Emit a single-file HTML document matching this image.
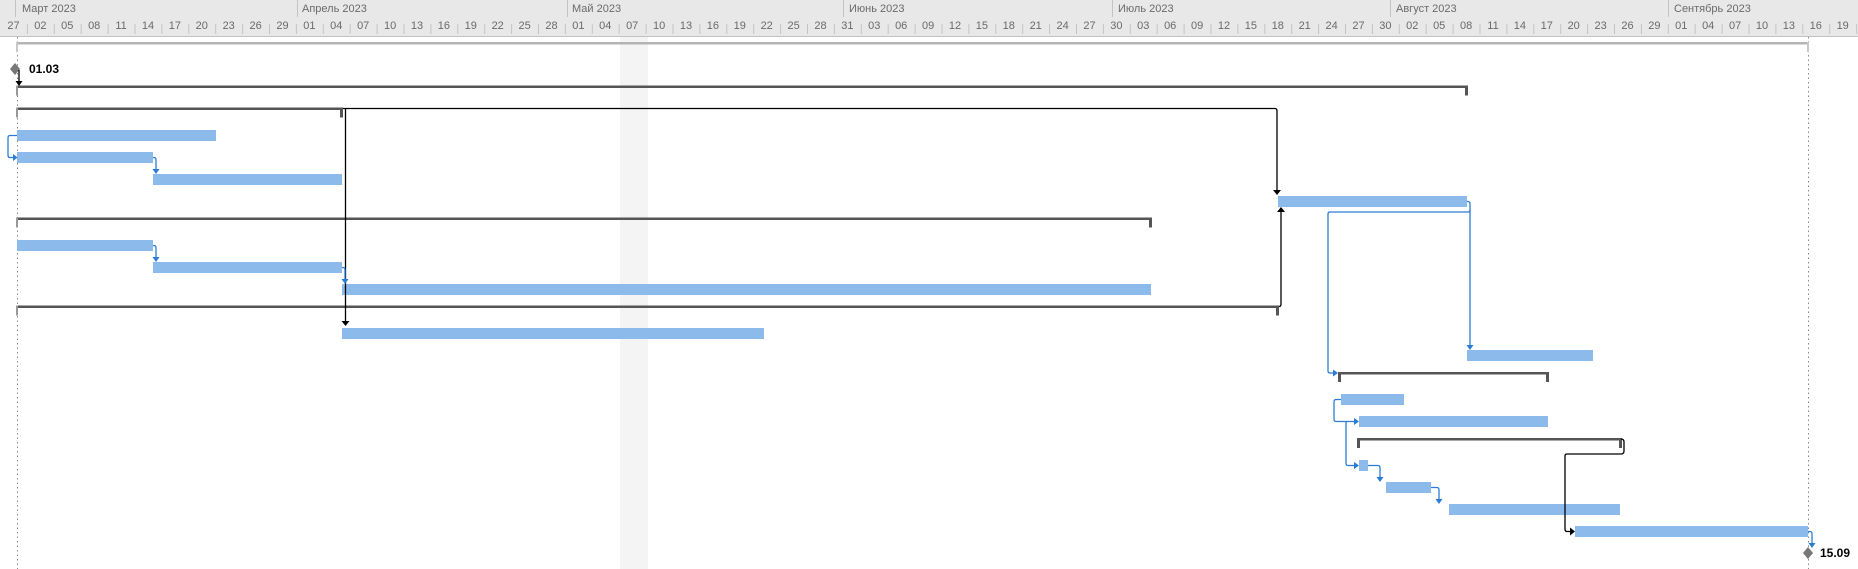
<!DOCTYPE html>
<html><head><meta charset="utf-8"><style>
html,body{margin:0;padding:0;background:#fff;width:1858px;height:569px;overflow:hidden}
svg{display:block}
text{font-family:"Liberation Sans",sans-serif}
.h{font-size:11px;fill:#6a6a6a}
.d{font-size:11px;fill:#6a6a6a;text-anchor:middle}
.b{fill:#8cbbeb}
.s{fill:#555}
.k{stroke:#000;stroke-width:1.3;fill:none}
.u{stroke:#2b7cd3;stroke-width:1.3;fill:none}
.ka{fill:#000}.ua{fill:#2b7cd3}
</style></head><body>
<svg width="1858" height="569" xmlns="http://www.w3.org/2000/svg">
<defs>
<pattern id="tk" x="0" y="0" width="26.9" height="20" patternUnits="userSpaceOnUse"><rect x="0" y="4" width="1" height="10" fill="#c4c4c4"/></pattern>
</defs>
<rect x="0" y="0" width="1858" height="36" fill="#e8e8e8"/>
<rect x="1" y="18" width="1858" height="18" fill="url(#tk)"/>
<rect x="0" y="36" width="1858" height="1" fill="#c2c2c2"/>
<g fill="#c4c4c4">
<rect x="15" y="0" width="1" height="17"/><rect x="297" y="0" width="1" height="17"/><rect x="567" y="0" width="1" height="17"/><rect x="843" y="0" width="1" height="17"/><rect x="1112" y="0" width="1" height="17"/><rect x="1390" y="0" width="1" height="17"/><rect x="1668" y="0" width="1" height="17"/>
</g>
<text class="h" x="22" y="12">Март 2023</text>
<text class="h" x="302" y="12">Апрель 2023</text>
<text class="h" x="572" y="12">Май 2023</text>
<text class="h" x="849" y="12">Июнь 2023</text>
<text class="h" x="1118" y="12">Июль 2023</text>
<text class="h" x="1396" y="12">Август 2023</text>
<text class="h" x="1674" y="12">Сентябрь 2023</text>
<g class="d">
<text x="13.5" y="29">27</text><text x="40.4" y="29">02</text><text x="67.3" y="29">05</text><text x="94.2" y="29">08</text><text x="121.1" y="29">11</text><text x="148" y="29">14</text><text x="174.9" y="29">17</text><text x="201.8" y="29">20</text><text x="228.7" y="29">23</text><text x="255.6" y="29">26</text><text x="282.5" y="29">29</text>
<text x="309.4" y="29">01</text><text x="336.3" y="29">04</text><text x="363.2" y="29">07</text><text x="390.1" y="29">10</text><text x="417" y="29">13</text><text x="443.9" y="29">16</text><text x="470.8" y="29">19</text><text x="497.7" y="29">22</text><text x="524.6" y="29">25</text><text x="551.5" y="29">28</text>
<text x="578.4" y="29">01</text><text x="605.3" y="29">04</text><text x="632.2" y="29">07</text><text x="659.1" y="29">10</text><text x="686" y="29">13</text><text x="712.9" y="29">16</text><text x="739.8" y="29">19</text><text x="766.7" y="29">22</text><text x="793.6" y="29">25</text><text x="820.5" y="29">28</text><text x="847.4" y="29">31</text>
<text x="874.3" y="29">03</text><text x="901.2" y="29">06</text><text x="928.1" y="29">09</text><text x="955" y="29">12</text><text x="981.9" y="29">15</text><text x="1008.8" y="29">18</text><text x="1035.7" y="29">21</text><text x="1062.6" y="29">24</text><text x="1089.5" y="29">27</text><text x="1116.4" y="29">30</text>
<text x="1143.3" y="29">03</text><text x="1170.2" y="29">06</text><text x="1197.1" y="29">09</text><text x="1224" y="29">12</text><text x="1250.9" y="29">15</text><text x="1277.8" y="29">18</text><text x="1304.7" y="29">21</text><text x="1331.6" y="29">24</text><text x="1358.5" y="29">27</text><text x="1385.4" y="29">30</text>
<text x="1412.3" y="29">02</text><text x="1439.2" y="29">05</text><text x="1466.1" y="29">08</text><text x="1493" y="29">11</text><text x="1519.9" y="29">14</text><text x="1546.8" y="29">17</text><text x="1573.7" y="29">20</text><text x="1600.6" y="29">23</text><text x="1627.5" y="29">26</text><text x="1654.4" y="29">29</text>
<text x="1681.3" y="29">01</text><text x="1708.2" y="29">04</text><text x="1735.1" y="29">07</text><text x="1762" y="29">10</text><text x="1788.9" y="29">13</text><text x="1815.8" y="29">16</text><text x="1842.7" y="29">19</text>
</g>
<rect x="620" y="37" width="28" height="532" fill="#f4f4f4"/>
<line x1="17.5" y1="37" x2="17.5" y2="569" stroke="#888" stroke-dasharray="1.5,3"/>
<line x1="1808.5" y1="37" x2="1808.5" y2="569" stroke="#888" stroke-dasharray="1.5,3"/>
<rect x="17" y="42" width="1792" height="2.5" fill="#b4b4b4"/>
<rect x="16" y="42" width="2" height="10" fill="#c8c8c8"/><rect x="1807" y="42" width="2" height="10" fill="#c8c8c8"/>
<g class="s">
<rect x="17" y="85.5" width="1450" height="2.5"/><rect x="16" y="85.5" width="2" height="10" fill="#999"/><rect x="1465" y="85.5" width="3" height="10"/>
<rect x="17" y="107.5" width="325" height="2.5"/><rect x="16" y="107.5" width="2" height="10" fill="#999"/><rect x="340" y="107.5" width="3" height="10"/>
<rect x="17" y="217.5" width="1134" height="2.5"/><rect x="16" y="217.5" width="2" height="10" fill="#999"/><rect x="1149" y="217.5" width="3" height="10"/>
<rect x="17" y="305.5" width="1261" height="2.5"/><rect x="16" y="305.5" width="2" height="10" fill="#999"/><rect x="1276" y="305.5" width="3" height="10"/>
<rect x="1339" y="372" width="209" height="2.5"/><rect x="1338" y="372" width="3" height="10"/><rect x="1546" y="372" width="3" height="10"/>
<rect x="1358" y="438" width="263" height="2.5"/><rect x="1357" y="438" width="3" height="10"/><rect x="1619" y="438" width="3" height="10"/>
</g>
<g class="b">
<rect x="17" y="130" width="199" height="11"/>
<rect x="17" y="152" width="136" height="11"/>
<rect x="153" y="174" width="189" height="11"/>
<rect x="1278" y="196" width="189" height="11"/>
<rect x="17" y="240" width="136" height="11"/>
<rect x="153" y="262" width="189" height="11"/>
<rect x="342" y="284" width="809" height="11"/>
<rect x="342" y="328" width="422" height="11"/>
<rect x="1467" y="350" width="126" height="11"/>
<rect x="1341" y="394" width="63" height="11"/>
<rect x="1359" y="416" width="189" height="11"/>
<rect x="1359" y="460" width="9" height="11"/>
<rect x="1386" y="482" width="45" height="11"/>
<rect x="1449" y="504" width="171" height="11"/>
<rect x="1575" y="526" width="233" height="11"/>
</g>
<path d="M15 63 L20 69 L15 75 L10 69Z" fill="#777"/>
<text x="29" y="73" style="font-size:12px;font-weight:bold;fill:#000">01.03</text>
<path d="M1808 547 L1813 553 L1808 559 L1803 553Z" fill="#777"/>
<text x="1820" y="557" style="font-size:12px;font-weight:bold;fill:#000">15.09</text>
<path class="k" d="M19 70 V81"/><path class="ka" d="M15.5 81 H22.5 L19 86Z"/>
<path class="k" d="M343 108.5 H1275 Q1277 108.5 1277 111 V190"/><path class="ka" d="M1273 190 H1281 L1277 195Z"/>
<path class="k" d="M345.5 109 V321"/><path class="ka" d="M341.5 321 H349.5 L345.5 326Z"/>
<path class="k" d="M1279 306.5 Q1281 306.5 1281 304 V212"/><path class="ka" d="M1277 212 H1285 L1281 207Z"/>
<path class="k" d="M1621 439 Q1624 439 1624 442 V451 Q1624 454 1621 454 H1567 Q1565 454 1565 456 V529 Q1565 531.5 1567 531.5 H1570"/><path class="ka" d="M1570 527.5 V535.5 L1575 531.5Z"/>
<path class="u" d="M17 135.5 H10 Q8 135.5 8 138 V155 Q8 157.5 10 157.5 H13"/><path class="ua" d="M13 154 V161 L17.5 157.5Z"/>
<path class="u" d="M153 157.5 H154 Q156 157.5 156 160 V169"/><path class="ua" d="M152.5 169 H159.5 L156 174Z"/>
<path class="u" d="M153 245.5 H154 Q156 245.5 156 248 V257"/><path class="ua" d="M152.5 257 H159.5 L156 262Z"/>
<path class="u" d="M342 267.5 H343 Q345 267.5 345 270 V279"/><path class="ua" d="M341.5 279 H348.5 L345 284Z"/>
<path class="u" d="M1467 201.5 H1468 Q1470 201.5 1470 204 V345"/><path class="ua" d="M1466.5 345 H1473.5 L1470 350Z"/>
<path class="u" d="M1470 210 Q1470 212 1468 212 H1330 Q1328 212 1328 214 V371 Q1328 373 1330 373 H1333"/><path class="ua" d="M1333 369.5 V376.5 L1338 373Z"/>
<path class="u" d="M1341 399.5 H1336 Q1334 399.5 1334 402 V419 Q1334 421.5 1336 421.5 H1354"/><path class="ua" d="M1354 418 V425 L1359 421.5Z"/>
<path class="u" d="M1347 421.5 Q1346 421.5 1346 424 V463 Q1346 465.5 1348 465.5 H1354"/><path class="ua" d="M1354 462 V469 L1359 465.5Z"/>
<path class="u" d="M1368 465.5 H1378 Q1380 465.5 1380 468 V477"/><path class="ua" d="M1376.5 477 H1383.5 L1380 482Z"/>
<path class="u" d="M1431 487.5 H1437 Q1439 487.5 1439 490 V499"/><path class="ua" d="M1435.5 499 H1442.5 L1439 504Z"/>
<path class="u" d="M1808 531.5 H1810 Q1812 531.5 1812 534 V543"/><path class="ua" d="M1808.5 543 H1815.5 L1812 548Z"/>
</svg>
</body></html>
